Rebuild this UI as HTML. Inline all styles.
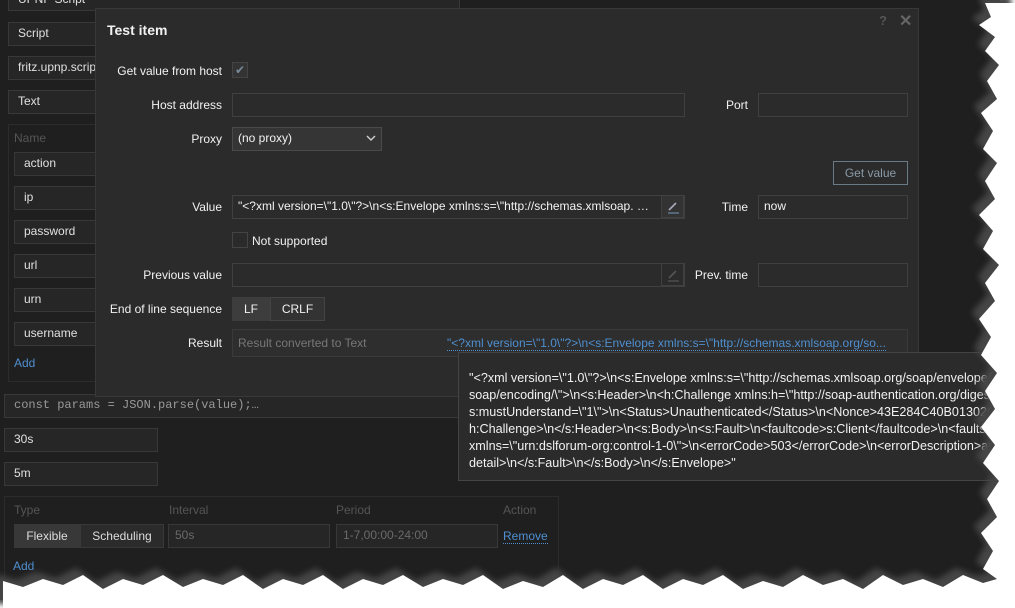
<!DOCTYPE html><html><head><meta charset="utf-8"><style>
*{box-sizing:border-box;margin:0;padding:0}
body{width:1015px;height:608px;background:#fff;position:relative;overflow:hidden;font-family:"Liberation Sans",sans-serif;font-size:12px;color:#f2f2f2}
.a{position:absolute}
.page{left:0;top:0;width:1000px;height:600px;background:#1f1f1f}
.in{position:absolute;background:#262626;border:1px solid #383838;color:#e0e0e0;padding:0 9px;line-height:21px;white-space:nowrap;overflow:hidden}
.dim{color:#6a6a6a}
.lbl{position:absolute;text-align:right;color:#f2f2f2}
.dlg{left:95px;top:8px;width:824px;height:389px;background:#2b2b2b;border:1px solid #383838}
.di{position:absolute;background:#2b2b2b;border:1px solid #404040;color:#f2f2f2;padding:0 5px;line-height:21px;white-space:nowrap;overflow:hidden}
.link{color:#4f8fd0;border-bottom:1px dotted #4f8fd0}
.pen{position:absolute;width:23px;height:23px;border-left:1px solid #404040;background:#333}
</style></head><body>
<div class="a page"></div>
<div class="in" style="left:8px;top:-12px;width:452px;height:23px">UPNP Script</div>
<div class="in" style="left:8px;top:22px;width:452px;height:24px">Script</div>
<div class="in" style="left:8px;top:56px;width:452px;height:24px">fritz.upnp.script</div>
<div class="in" style="left:8px;top:90px;width:452px;height:24px">Text</div>
<div class="a" style="left:8px;top:124px;width:452px;height:258px;border:1px solid #2c2c2c;background:#1f1f1f"></div>
<div class="a dim" style="left:14px;top:131px;color:#555">Name</div>
<div class="in" style="left:14px;top:152px;width:200px;height:24px">action</div>
<div class="in" style="left:14px;top:186px;width:200px;height:24px">ip</div>
<div class="in" style="left:14px;top:220px;width:200px;height:24px">password</div>
<div class="in" style="left:14px;top:254px;width:200px;height:24px">url</div>
<div class="in" style="left:14px;top:288px;width:200px;height:24px">urn</div>
<div class="in" style="left:14px;top:322px;width:200px;height:24px">username</div>
<div class="a link" style="left:14px;top:356px;border:0">Add</div>
<div class="in" style="left:4px;top:394px;width:458px;height:24px;font-family:'Liberation Mono',monospace;color:#999;font-size:12px">const params = JSON.parse(value);…</div>
<div class="in" style="left:4px;top:428px;width:154px;height:24px">30s</div>
<div class="in" style="left:4px;top:462px;width:154px;height:24px">5m</div>
<div class="a" style="left:4px;top:496px;width:555px;height:100px;border:1px solid #2c2c2c"></div>
<div class="a" style="left:14px;top:503px;color:#555">Type</div>
<div class="a" style="left:169px;top:503px;color:#555">Interval</div>
<div class="a" style="left:336px;top:503px;color:#555">Period</div>
<div class="a" style="left:503px;top:503px;color:#555">Action</div>
<div class="a" style="left:14px;top:524px;width:66px;height:24px;background:#383838;line-height:24px;text-align:center;color:#ddd">Flexible</div>
<div class="a" style="left:80px;top:524px;width:84px;height:24px;background:#2b2b2b;border:1px solid #383838;line-height:22px;text-align:center;color:#ddd">Scheduling</div>
<div class="in dim" style="left:168px;top:524px;width:162px;height:24px;padding:0 6px">50s</div>
<div class="in dim" style="left:336px;top:524px;width:162px;height:24px;padding:0 6px">1-7,00:00-24:00</div>
<div class="a link" style="left:503px;top:529px">Remove</div>
<div class="a link" style="left:13px;top:559px;border:0">Add</div>

<div class="a dlg"></div>
<div class="a" style="left:107px;top:22px;font-weight:bold;font-size:14px">Test item</div>
<div class="a" style="left:879px;top:13px;color:#555;font-size:13px;font-weight:bold">?</div>
<div class="a" style="left:899px;top:11px;color:#666;font-size:16px;font-weight:bold">✕</div>
<div class="lbl" style="left:100px;width:122px;top:64px">Get value from host</div>
<div class="a" style="left:232px;top:62px;width:16px;height:16px;border:1px solid #444;background:#333;color:#7a8a99;font-size:12px;line-height:14px;text-align:center">✔</div>
<div class="lbl" style="left:100px;width:122px;top:98px">Host address</div>
<div class="di" style="left:232px;top:93px;width:453px;height:24px"></div>
<div class="lbl" style="left:690px;width:58px;top:98px">Port</div>
<div class="di" style="left:758px;top:93px;width:150px;height:24px"></div>
<div class="lbl" style="left:100px;width:122px;top:132px">Proxy</div>
<div class="di" style="left:232px;top:127px;width:150px;height:24px;background:#353535;border-color:#4a4a4a">(no proxy)</div>
<svg class="a" style="left:366px;top:134px" width="10" height="8"><path d="M1 2l4 4 4-4" stroke="#ccc" stroke-width="1.5" fill="none"/></svg>
<div class="a" style="left:833px;top:161px;width:75px;height:24px;border:1px solid #6a7b88;color:#8a9aa8;text-align:center;line-height:22px">Get value</div>
<div class="lbl" style="left:100px;width:122px;top:200px">Value</div>
<div class="di" style="left:232px;top:195px;width:453px;height:24px">"&lt;?xml version=\"1.0\"?&gt;\n&lt;s:Envelope xmlns:s=\"http://schemas.xmlsoap. …</div>
<div class="pen" style="left:661px;top:195px;border:1px solid #404040"></div>
<svg class="a" style="left:665px;top:199px" width="16" height="16"><path d="M4 11L11 4" stroke="#aab" stroke-width="1.6"/><path d="M3 14h11" stroke="#6a8aa8" stroke-width="1.2"/></svg>
<div class="lbl" style="left:690px;width:58px;top:200px">Time</div>
<div class="di" style="left:758px;top:195px;width:150px;height:24px">now</div>
<div class="a" style="left:232px;top:232px;width:16px;height:16px;border:1px solid #444;background:#2b2b2b"></div>
<div class="a" style="left:252px;top:234px">Not supported</div>
<div class="lbl" style="left:100px;width:122px;top:268px">Previous value</div>
<div class="di" style="left:232px;top:263px;width:453px;height:24px"></div>
<div class="pen" style="left:661px;top:263px;border:1px solid #404040;background:#2b2b2b"></div>
<svg class="a" style="left:665px;top:267px" width="16" height="16"><path d="M4 11L11 4" stroke="#555" stroke-width="1.6"/><path d="M3 14h11" stroke="#555" stroke-width="1.2"/></svg>
<div class="lbl" style="left:680px;width:68px;top:268px">Prev. time</div>
<div class="di" style="left:758px;top:263px;width:150px;height:24px"></div>
<div class="lbl" style="left:100px;width:122px;top:302px">End of line sequence</div>
<div class="a" style="left:232px;top:297px;width:38px;height:24px;background:#3d3d3d;text-align:center;line-height:24px">LF</div>
<div class="a" style="left:270px;top:297px;width:55px;height:24px;background:#333;border:1px solid #444;text-align:center;line-height:22px">CRLF</div>
<div class="lbl" style="left:100px;width:122px;top:336px">Result</div>
<div class="a" style="left:232px;top:329px;width:676px;height:28px;background:#2e2e2e;border:1px solid #3a3a3a"></div>
<div class="a" style="left:238px;top:336px;color:#777">Result converted to Text</div>
<div class="a link" style="left:447px;top:336px;white-space:nowrap">"&lt;?xml version=\"1.0\"?&gt;\n&lt;s:Envelope xmlns:s=\"http://schemas.xmlsoap.org/so...</div>

<div class="a" style="left:458px;top:352px;width:540px;height:129px;background:#2b2b2b;border:1px solid #444;overflow:hidden;padding:17px 0 0 10px;line-height:17px;white-space:nowrap;color:#f2f2f2;font-size:12.6px">
"&lt;?xml version=\"1.0\"?&gt;\n&lt;s:Envelope xmlns:s=\"http://schemas.xmlsoap.org/soap/envelope/\"<br>
soap/encoding/\"&gt;\n&lt;s:Header&gt;\n&lt;h:Challenge xmlns:h=\"http://soap-authentication.org/digest/2001/10/\"<br>
s:mustUnderstand=\"1\"&gt;\n&lt;Status&gt;Unauthenticated&lt;/Status&gt;\n&lt;Nonce&gt;43E284C40B01302C&gt;<br>
h:Challenge&gt;\n&lt;/s:Header&gt;\n&lt;s:Body&gt;\n&lt;s:Fault&gt;\n&lt;faultcode&gt;s:Client&lt;/faultcode&gt;\n&lt;faultstring&gt;<br>
xmlns=\"urn:dslforum-org:control-1-0\"&gt;\n&lt;errorCode&gt;503&lt;/errorCode&gt;\n&lt;errorDescription&gt;auth<br>
detail&gt;\n&lt;/s:Fault&gt;\n&lt;/s:Body&gt;\n&lt;/s:Envelope&gt;"</div>

<svg class="a" style="left:0;top:0" width="1015" height="608">
<defs><filter id="b"><feGaussianBlur stdDeviation="3"/></filter>
<path id="t" d="M1015 0L982 0 988 14 976 22 992 34 982 48 996 62 984 78 994 96 978 110 990 128 980 146 994 160 982 178 992 196 976 212 990 228 980 246 996 262 982 280 992 298 976 316 988 334 978 352 994 370 982 388 992 406 978 424 992 442 980 460 996 478 984 496 994 514 978 530 990 548 980 566 L994 576 980 580 960 572 940 584 920 576 900 582 880 572 860 586 840 576 820 582 800 572 780 584 760 578 740 586 720 572 700 582 680 576 660 586 640 572 620 582 600 576 580 586 560 572 540 584 520 578 500 586 480 572 460 582 440 576 420 584 400 572 380 582 360 576 340 586 320 572 300 582 280 576 260 586 240 572 220 582 200 576 180 584 160 572 140 582 120 576 100 586 80 572 60 582 40 576 20 584 0 578 L0 608 1015 608Z"/></defs>
<g filter="url(#b)" fill="#444"><use href="#t" transform="translate(-4,-4)"/></g>
<use href="#t" fill="#fff" transform="translate(3,3)"/>
</svg>
</body></html>
